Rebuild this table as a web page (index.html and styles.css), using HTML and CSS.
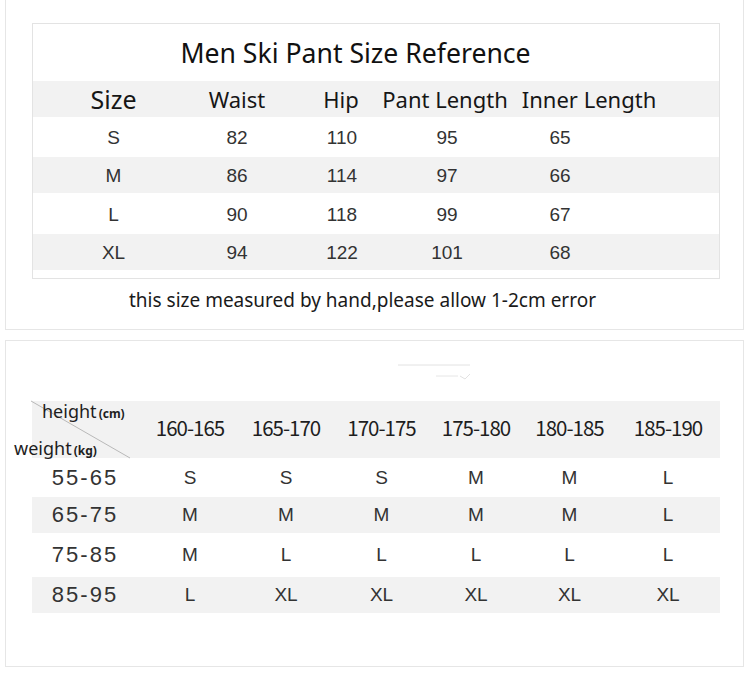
FILE: index.html
```html
<!DOCTYPE html>
<html lang="en">
<head>
<meta charset="utf-8">
<title>Men Ski Pant Size Reference</title>
<link rel="stylesheet" href="styles.css">
</head>
<body>
<div class="page">
  <section class="card card-top">
    <div class="t1">
      <div class="t1-title">Men Ski Pant Size Reference</div>
      <div class="t1-head">
        <span class="cell h-size">Size</span>
        <span class="cell">Waist</span>
        <span class="cell">Hip</span>
        <span class="cell">Pant Length</span>
        <span class="cell">Inner Length</span>
      </div>
      <div class="t1-row r-s">
        <span class="cell">S</span><span class="cell">82</span><span class="cell">110</span><span class="cell">95</span><span class="cell">65</span>
      </div>
      <div class="t1-row r-m grey">
        <span class="cell">M</span><span class="cell">86</span><span class="cell">114</span><span class="cell">97</span><span class="cell">66</span>
      </div>
      <div class="t1-row r-l">
        <span class="cell">L</span><span class="cell">90</span><span class="cell">118</span><span class="cell">99</span><span class="cell">67</span>
      </div>
      <div class="t1-row r-xl grey">
        <span class="cell">XL</span><span class="cell">94</span><span class="cell">122</span><span class="cell">101</span><span class="cell">68</span>
      </div>
      <div class="t1-foot"></div>
    </div>
    <p class="note">this size measured by hand,please allow 1-2cm error</p>
  </section>

  <section class="card card-bottom">
    <svg class="marks" width="737" height="60" viewBox="0 0 737 60" aria-hidden="true">
      <line x1="392" y1="24" x2="464" y2="24" stroke="#e2e2e2" stroke-width="1"/>
      <line x1="430" y1="35" x2="452" y2="35" stroke="#e6e6e6" stroke-width="1"/>
      <path d="M454 35 L459 38 L464 33" fill="none" stroke="#e2e2e2" stroke-width="1"/>
    </svg>
    <div class="t2">
      <div class="t2-head grey">
        <div class="corner">
          <svg class="diag" width="110" height="57" viewBox="0 0 110 57" aria-hidden="true">
            <line x1="-1" y1="0" x2="98" y2="57" stroke="#b9b9b9" stroke-width="1"/>
          </svg>
          <span class="lab lab-h">height<small>(cm)</small></span>
          <span class="lab lab-w">weight<small>(kg)</small></span>
        </div>
        <span class="cell num">160-165</span>
        <span class="cell num">165-170</span>
        <span class="cell num">170-175</span>
        <span class="cell num">175-180</span>
        <span class="cell num">180-185</span>
        <span class="cell num">185-190</span>
      </div>
      <div class="t2-row r1">
        <span class="cell wt">55-65</span><span class="cell">S</span><span class="cell">S</span><span class="cell">S</span><span class="cell">M</span><span class="cell">M</span><span class="cell">L</span>
      </div>
      <div class="t2-row r2 grey">
        <span class="cell wt">65-75</span><span class="cell">M</span><span class="cell">M</span><span class="cell">M</span><span class="cell">M</span><span class="cell">M</span><span class="cell">L</span>
      </div>
      <div class="t2-row r3">
        <span class="cell wt">75-85</span><span class="cell">M</span><span class="cell">L</span><span class="cell">L</span><span class="cell">L</span><span class="cell">L</span><span class="cell">L</span>
      </div>
      <div class="t2-row r4 grey">
        <span class="cell wt">85-95</span><span class="cell">L</span><span class="cell">XL</span><span class="cell">XL</span><span class="cell">XL</span><span class="cell">XL</span><span class="cell">XL</span>
      </div>
    </div>
  </section>
</div>
</body>
</html>
```

FILE: styles.css
```css
* { box-sizing: border-box; }

html, body {
  margin: 0;
  padding: 0;
  background: #ffffff;
}

body {
  font-family: "Noto Sans", "Open Sans", sans-serif;
  color: #1c1c1c;
}

.page {
  width: 750px;
  height: 691px;
  padding-left: 5px;
  overflow: hidden;
}

.card {
  width: 739px;
  border: 1px solid #e6e6e6;
}

.card-top {
  border-top: none;
  height: 330px;
  padding: 23px 0 0 26px;
}

.grey { background: #f2f2f2; }

.cell {
  display: flex;
  justify-content: center;
  align-items: center;
  white-space: nowrap;
  min-width: 0;
}

/* ---------- table 1 ---------- */
.t1 {
  width: 688px;
  border: 1px solid #e3e3e3;
}

.t1-title {
  height: 57px;
  display: flex;
  align-items: center;
  justify-content: center;
  padding-right: 41px;
  font-size: 26.6px;
  color: #111;
}

.t1-head {
  height: 36px;
  display: grid;
  grid-template-columns: 161px 86px 122px 86px 202px 1fr;
  background: #f2f2f2;
  font-size: 22px;
  color: #161616;
}

.t1-head .h-size { font-size: 25px; }

.t1-row {
  display: grid;
  grid-template-columns: 161px 86px 124px 86px 140px 1fr;
  font-family: "Liberation Sans", Arial, sans-serif;
  font-size: 19px;
  color: #333;
  padding-top: 2px;
}

.r-s { height: 40px; }
.r-m { height: 36px; }
.r-l { height: 41px; }
.r-xl { height: 36px; }

.t1-foot { height: 8px; }

.note {
  margin: 9px 0 0 0;
  padding-left: 97px;
  line-height: 24px;
  font-size: 19px;
  color: #1a1a1a;
}

/* ---------- table 2 ---------- */
.card-bottom {
  margin-top: 10px;
  height: 327px;
  padding-left: 26px;
}

.marks {
  display: block;
  margin-left: -26px;
}

.t2 {
  width: 688px;
}

.t2-head,
.t2-row {
  display: grid;
  grid-template-columns: 110px 96px 96px 95px 94px 93px 1fr;
}

.t2-head { height: 57px; }

.corner {
  position: relative;
  height: 57px;
  display: flex;
  flex-direction: column;
  justify-content: space-between;
}

.diag {
  position: absolute;
  left: 0;
  top: 0;
  overflow: visible;
}

.lab {
  position: relative;
  font-size: 18px;
  line-height: 22px;
  color: #1e1e1e;
  white-space: nowrap;
}

.lab small {
  font-size: 12px;
  font-weight: 700;
  margin-left: 2px;
}

.lab-h { padding-left: 10px; margin-top: -1px; }
.lab-w { margin-left: -18px; margin-bottom: -4px; }

.num {
  font-family: "Noto Sans CJK SC", "Noto Sans", sans-serif;
  font-size: 20.5px;
  letter-spacing: -1px;
  color: #1e1e1e;
  padding-bottom: 6px;
}

.t2-row {
  font-family: "Liberation Sans", Arial, sans-serif;
  font-size: 19px;
  color: #333;
}

.t2-row .wt {
  font-size: 22px;
  letter-spacing: 2px;
  padding-right: 4px;
}

.r1 { height: 39px; }
.r2 { height: 36px; }
.r3 { height: 44px; }
.r4 { height: 36px; }
```
